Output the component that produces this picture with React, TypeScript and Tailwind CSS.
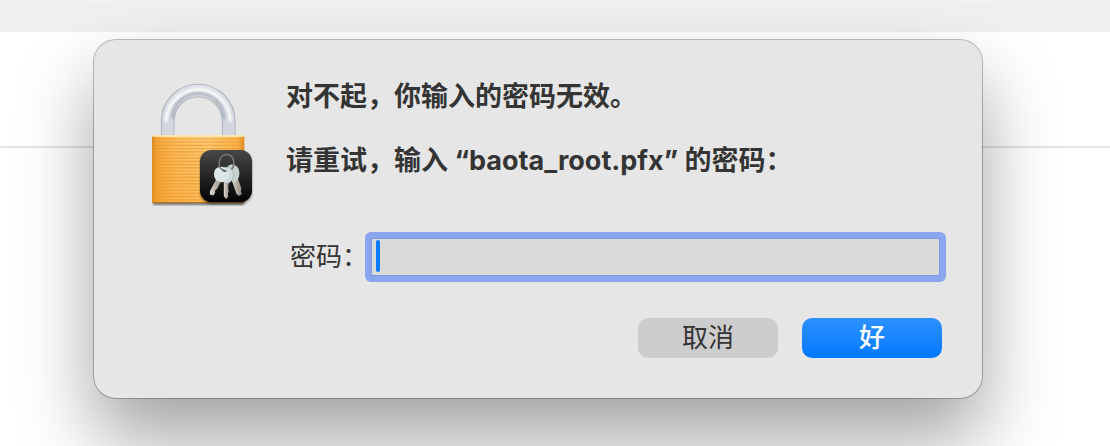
import React from "react";

function LockIcon() {
  const stripes = Array.from({ length: 20 }, (_, i) => 139 + i * 3.2);
  return (
    <svg viewBox="140 75 130 140" className="h-[140px] w-[130px] shrink-0" aria-hidden="true">
      <defs>
        <linearGradient id="body" x1="0" x2="1" y1="0" y2="0">
          <stop offset="0" stopColor="#d98a1c" />
          <stop offset="0.05" stopColor="#f3a63a" />
          <stop offset="0.22" stopColor="#fdbc5c" />
          <stop offset="0.6" stopColor="#ffcd7c" />
          <stop offset="0.93" stopColor="#fbb54e" />
          <stop offset="1" stopColor="#d98c22" />
        </linearGradient>
        <linearGradient id="shade" x1="0" x2="0" y1="0" y2="1">
          <stop offset="0" stopColor="#f08c00" stopOpacity="0" />
          <stop offset="1" stopColor="#ee8f10" stopOpacity="0.25" />
        </linearGradient>
        <linearGradient id="steel" gradientUnits="userSpaceOnUse" x1="0" x2="0" y1="84" y2="137">
          <stop offset="0" stopColor="#dfe2e7" />
          <stop offset="0.5" stopColor="#d0d5dd" />
          <stop offset="1" stopColor="#d3d8e0" />
        </linearGradient>
        <linearGradient id="badge" x1="0" x2="0" y1="0" y2="1">
          <stop offset="0" stopColor="#474747" />
          <stop offset="0.5" stopColor="#252525" />
          <stop offset="1" stopColor="#020202" />
        </linearGradient>
        <linearGradient id="blade" x1="0" x2="1" y1="0" y2="0">
          <stop offset="0" stopColor="#ded9d1" />
          <stop offset="0.5" stopColor="#bab2a9" />
          <stop offset="1" stopColor="#91887f" />
        </linearGradient>
        <filter id="soft" x="-20%" y="-20%" width="140%" height="140%">
          <feGaussianBlur stdDeviation="1.2" />
        </filter>
      </defs>
      <path d="M153 202H244V205H153Z" fill="#000" opacity="0.5" filter="url(#soft)" />
      <g fill="none">
        <path d="M167.7 137V121A30.5 30.5 0 0 1 228.7 121V137" stroke="#a9aeb5" strokeWidth="13.6" />
        <path d="M167.7 137V121A30.5 30.5 0 0 1 228.7 121V137" stroke="url(#steel)" strokeWidth="11.8" />
        <path d="M166 122A32.200 32.200 0 0 1 230.500 122" stroke="#fff" strokeWidth="3.5" opacity="0.85" filter="url(#soft)" />
        <path d="M172.500 119A25.700 25.700 0 0 1 224 119" stroke="#9ba3ae" strokeWidth="2.6" opacity="0.7" filter="url(#soft)" />
      </g>
      <rect x="152" y="135.5" width="92.3" height="67.5" rx="1" fill="url(#body)" />
      {stripes.map((y) => (
        <path key={y} d={`M152 ${y}H244.3`} stroke="#e8962a" strokeWidth="1.2" opacity="0.65" />
      ))}
      <rect x="152" y="135.5" width="92.3" height="67.5" rx="1" fill="url(#shade)" />
      <path d="M152.5 136H244" stroke="#fff0c8" strokeWidth="1.3" />
      <path d="M152.5 202.5H244" stroke="#b26d12" strokeWidth="1.2" />
      <rect x="200" y="151" width="52" height="53" rx="12" fill="#000" opacity="0.45" filter="url(#soft)" />
      <rect x="200" y="150" width="52" height="52" rx="11.5" fill="url(#badge)" />
      <path d="M231 178L236.500 194L239 195.800L241.800 194L240.800 191L241.500 188.500L236.500 175Z" fill="url(#blade)" />
      <path d="M228 166C232 162.500 238 165 239.200 171C240 177 237.500 181.500 234 182C230 182 226 171 228 166Z" fill="#c6d2d0" />
      <path d="M223.800 179L223.800 196L226 199L228.400 196.500L227.900 193.500L229 191L228.200 188.500L229 179Z" fill="url(#blade)" />
      <path d="M224 168C228 165 233.500 169 233.500 174.500C233.500 180 230 183.500 226.500 183.500C222 182 221 172 224 168Z" fill="#d0dcdb" stroke="#8e9a99" strokeWidth="0.5" />
      <path d="M216.500 179L210 191L209.800 194.500L213.500 195.500L215.200 192.500L215 190.500L217 189L221.800 180Z" fill="url(#blade)" />
      <path d="M215.200 169.500C218 165.800 223 166.300 226.500 168.500C230 171 229.600 176.500 227 180C224.500 183 219 183 216 180C213.500 177 213.500 172.500 215.200 169.500Z" fill="#dbe7e6" />
      <path d="M225 170.500C216 170 218 155.500 226 154.500C234.500 154 235.500 165 231.500 169.500" fill="none" stroke="#7d7771" strokeWidth="1.6" />
      <path d="M222.500 169.500Q224 172.500 226.500 170.500" fill="none" stroke="#5b5550" strokeWidth="1.3" />
    </svg>
  );
}

export default function App() {
  return (
    <div className="grid min-h-screen overflow-hidden bg-white font-['Inter','Noto_Sans_CJK_SC',sans-serif] text-[26px] leading-8 text-[#343434]">
      <div className="col-start-1 row-start-1" aria-hidden="true">
        <div className="h-8 border-t border-[#f4f4f4] bg-[#f0f0f0]" />
        <div className="h-[116px] border-b-2 border-[#e4e4e4]" />
      </div>
      <form
        role="alertdialog"
        aria-labelledby="message"
        onSubmit={(e) => e.preventDefault()}
        className="col-start-1 row-start-1 mt-10 mr-32 mb-12 ml-[94px] flex items-start gap-4 self-start rounded-[22px] bg-[#e6e6e6] pt-[35px] pr-10 pb-10 pl-[46px] shadow-[0_0_0_1px_rgba(0,0,0,0.25),0_40px_76px_rgba(0,0,0,0.37)]"
      >
        <LockIcon />
        <div className="min-w-0 flex-1 pt-[6px]">
          <div id="message" className="space-y-8 text-[27px] leading-8 font-bold">
            <p>对不起，你输入的密码无效。</p>
            <p>请重试，输入 “baota_root.pfx” 的密码：</p>
          </div>
          <div className="mt-[55px] -mr-1 flex items-center">
            <label htmlFor="password" className="w-[79px] shrink-0 pl-1 whitespace-nowrap">
              密码：
            </label>
            <div className="relative min-w-0 flex-1 rounded-md bg-[#8aa6ee] p-[6px]">
              <input
                id="password"
                type="password"
                className="block h-[38px] w-full border border-[#7d9ae0] bg-[#dadada] px-2 outline-none"
              />
              <span className="absolute top-2 left-[11px] h-8 w-1 rounded-sm bg-[#067aff]" />
            </div>
          </div>
          <div className="mt-9 flex justify-end gap-6">
            <button type="button" className="h-10 w-[140px] rounded-[10px] bg-[#cdcdcd]">
              取消
            </button>
            <button
              type="submit"
              className="h-10 w-[140px] rounded-[10px] bg-linear-to-b from-[#2b91ff] to-[#0078ff] font-medium text-white"
            >
              好
            </button>
          </div>
        </div>
      </form>
    </div>
  );
}
